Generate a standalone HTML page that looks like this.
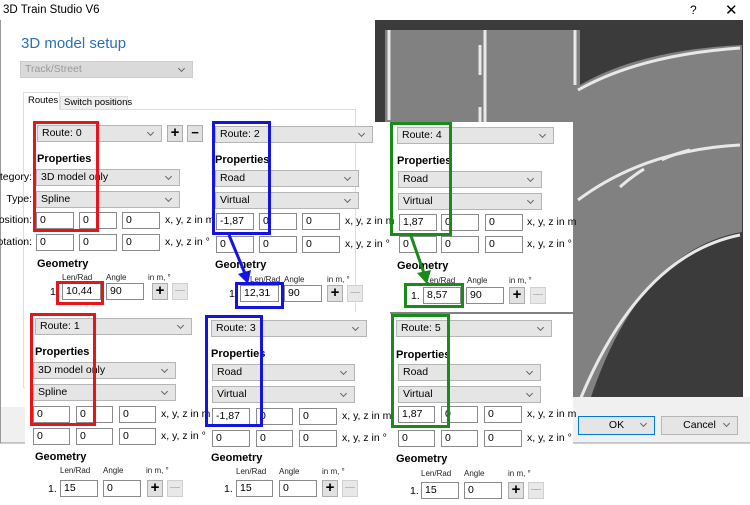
<!DOCTYPE html>
<html><head><meta charset="utf-8"><style>
*{margin:0;padding:0;box-sizing:border-box}
body{width:750px;height:505px;position:relative;overflow:hidden;background:#fff;font-family:"Liberation Sans",sans-serif;font-size:10.5px;color:#000}
.a{position:absolute;white-space:nowrap}
.cb{position:absolute;height:17px;background:#e5e5e5;border:1px solid #b5b5b5;padding:1px 4px;line-height:13px;white-space:nowrap}
.cb:after{content:"";position:absolute;right:8px;top:4px;width:4px;height:4px;border-right:1px solid #666;border-bottom:1px solid #666;transform:rotate(45deg)}
.in{position:absolute;height:17px;background:#fff;border:1px solid #8a8a8a;padding:1px 3px;line-height:13px;white-space:nowrap}
.bt{position:absolute;width:16px;height:17px;background:#e1e1e1;border:1px solid #adadad;text-align:center;font-weight:bold;font-size:15px;line-height:14px}
.bt.d{color:#bbb;background:#e8e8e8;border-color:#d0d0d0;font-size:10px}
.b{font-weight:bold;font-size:11px}
.s{font-size:8px;color:#222}
.r{position:absolute;border:3px solid}
.lb{position:absolute;right:718px;white-space:nowrap}
</style></head><body>
<svg class="a" style="left:0;top:0" width="750" height="505">
<rect x="375" y="20" width="368" height="387" fill="#3b3b3b"/>
<path d="M385 30 L580 30 L580 85 Q640 50 742 45 L742 232 Q640 250 590 400 L385 400 Z" fill="#818181"/>
<path d="M389 30 V120 M575 30 V85" stroke="#e8e8e8" stroke-width="3" fill="none"/>
<path d="M485 30 V122" stroke="#e8e8e8" stroke-width="3"/>
<path d="M480 45 V75 M480 107 V122" stroke="#e8e8e8" stroke-width="3"/>
<path d="M578 90 Q640 55 740 48" stroke="#e8e8e8" stroke-width="3" fill="none"/>
<path d="M578 200 Q645 150 740 145" stroke="#e8e8e8" stroke-width="3" fill="none"/>
<path d="M620 187 Q650 160 690 150" stroke="#e8e8e8" stroke-width="3" fill="none" stroke-dasharray="30 20"/>
<path d="M740 235 Q640 255 580 400" stroke="#e8e8e8" stroke-width="3" fill="none"/>
<rect x="573" y="397" width="177" height="46" fill="#f0f0f0"/>
<rect x="0" y="407" width="573" height="36" fill="#f0f0f0"/>
<line x1="0" y1="443" x2="750" y2="443" stroke="#999"/>
<line x1="0.5" y1="20" x2="0.5" y2="443" stroke="#999"/>
</svg>
<div class="a" style="left:3px;top:4px;font-size:11.5px">3D Train Studio V6</div>
<div class="a" style="left:690px;top:3px;font-size:12px">?</div>
<div class="a" style="left:725px;top:1px;font-size:15px">✕</div>
<div class="a" style="left:21px;top:35px;font-size:15px;color:#2b6fb5">3D model setup</div>
<div class="cb" style="left:20px;top:61px;width:173px;color:#999;background:#dadada;border-color:#ccc">Track/Street</div>
<div class="a" style="left:23px;top:109px;width:333px;height:279px;border:1px solid #ddd"></div>
<div class="a" style="left:60px;top:96px;width:68px;height:14px;background:#f0f0f0;border:1px solid #ddd;font-size:9.5px;padding-left:3px">Switch positions</div>
<div class="a" style="left:23px;top:92px;width:37px;height:18px;background:#fff;border:1px solid #ddd;border-bottom:none;font-size:9.5px;padding:2px 0 0 4px">Routes</div>
<div class="lb" style="top:171px">ategory:</div>
<div class="lb" style="top:193px">Type:</div>
<div class="lb" style="top:214px">Position:</div>
<div class="lb" style="top:236px">otation:</div>
<div class="a" style="left:373px;top:122px;width:17px;height:190px;background:#fff"></div>
<div class="a" style="left:390px;top:122px;width:183px;height:190px;background:#fff"></div>
<div class="a" style="left:25px;top:312px;width:365px;height:193px;background:#fff"></div>
<div class="a" style="left:390px;top:314px;width:183px;height:191px;background:#fff"></div>
<div class="cb" style="left:578px;top:416px;width:77px;height:19px;border:1px solid #0078d7;text-align:center;padding-top:2px">OK</div>
<div class="cb" style="left:661px;top:416px;width:77px;height:19px;text-align:center;padding-top:2px">Cancel</div>

<div class="a" style="left:37px;top:125px">
<div class="cb" style="left:0;top:0;width:125px">Route: 0</div>
<div class="bt" style="left:130px;top:0">+</div><div class="bt" style="left:150px;top:0;font-size:13px">−</div>
<div class="a b" style="left:0;top:28px">Properties</div>
<div class="cb" style="left:-1px;top:44px;width:144px">3D model only</div>
<div class="cb" style="left:-1px;top:66px;width:144px">Spline</div>
<div class="in" style="left:-1px;top:87px;width:38px">0</div><div class="in" style="left:42px;top:87px;width:38px">0</div><div class="in" style="left:85px;top:87px;width:38px">0</div><div class="a" style="left:128px;top:89px">x, y, z in m</div>
<div class="in" style="left:-1px;top:109px;width:38px">0</div><div class="in" style="left:42px;top:109px;width:38px">0</div><div class="in" style="left:85px;top:109px;width:38px">0</div><div class="a" style="left:128px;top:111px">x, y, z in °</div>
<div class="a b" style="left:0;top:133px">Geometry</div>
<div class="a s" style="left:25px;top:148px">Len/Rad</div><div class="a s" style="left:69px;top:148px">Angle</div><div class="a s" style="left:111px;top:148px">in m, °</div>
<div class="a" style="left:13px;top:161px">1.</div><div class="in" style="left:25px;top:158px;width:39px">10,44</div><div class="in" style="left:69px;top:158px;width:38px">90</div>
<div class="bt" style="left:115px;top:158px">+</div><div class="bt d" style="left:135px;top:158px">—</div>
</div>

<div class="a" style="left:215px;top:126px">
<div class="cb" style="left:0;top:0;width:158px">Route: 2</div>
<div class="a b" style="left:0;top:28px">Properties</div>
<div class="cb" style="left:0;top:44px;width:144px">Road</div>
<div class="cb" style="left:0;top:66px;width:144px">Virtual</div>
<div class="in" style="left:1px;top:87px;width:38px">-1,87</div><div class="in" style="left:44px;top:87px;width:38px">0</div><div class="in" style="left:87px;top:87px;width:38px">0</div><div class="a" style="left:130px;top:89px">x, y, z in m</div>
<div class="in" style="left:1px;top:110px;width:38px">0</div><div class="in" style="left:44px;top:110px;width:38px">0</div><div class="in" style="left:87px;top:110px;width:38px">0</div><div class="a" style="left:130px;top:112px">x, y, z in °</div>
<div class="a b" style="left:0;top:133px">Geometry</div>
<div class="a s" style="left:35px;top:149px">Len/Rad</div><div class="a s" style="left:69px;top:149px">Angle</div><div class="a s" style="left:112px;top:149px">in m, °</div>
<div class="a" style="left:14px;top:162px">1.</div><div class="in" style="left:25px;top:159px;width:39px">12,31</div><div class="in" style="left:69px;top:159px;width:38px">90</div>
<div class="bt" style="left:112px;top:159px">+</div><div class="bt d" style="left:132px;top:159px">—</div>
</div>

<div class="a" style="left:397px;top:127px">
<div class="cb" style="left:0;top:0;width:157px">Route: 4</div>
<div class="a b" style="left:0;top:28px">Properties</div>
<div class="cb" style="left:1px;top:44px;width:144px">Road</div>
<div class="cb" style="left:1px;top:66px;width:144px">Virtual</div>
<div class="in" style="left:2px;top:87px;width:38px">1,87</div><div class="in" style="left:44px;top:87px;width:38px">0</div><div class="in" style="left:88px;top:87px;width:38px">0</div><div class="a" style="left:130px;top:89px">x, y, z in m</div>
<div class="in" style="left:2px;top:109px;width:38px">0</div><div class="in" style="left:44px;top:109px;width:38px">0</div><div class="in" style="left:88px;top:109px;width:38px">0</div><div class="a" style="left:130px;top:111px">x, y, z in °</div>
<div class="a b" style="left:0;top:133px">Geometry</div>
<div class="a s" style="left:28px;top:149px">Len/Rad</div><div class="a s" style="left:70px;top:149px">Angle</div><div class="a s" style="left:112px;top:149px">in m, °</div>
<div class="a" style="left:14px;top:163px">1.</div><div class="in" style="left:26px;top:160px;width:38px">8,57</div><div class="in" style="left:69px;top:160px;width:38px">90</div>
<div class="bt" style="left:112px;top:160px">+</div><div class="bt d" style="left:133px;top:160px">—</div>
</div>

<div class="a" style="left:35px;top:318px">
<div class="cb" style="left:0;top:0;width:157px">Route: 1</div>
<div class="a b" style="left:0;top:28px">Properties</div>
<div class="cb" style="left:-2px;top:44px;width:143px">3D model only</div>
<div class="cb" style="left:-2px;top:66px;width:143px">Spline</div>
<div class="in" style="left:-2px;top:88px;width:37px">0</div><div class="in" style="left:41px;top:88px;width:37px">0</div><div class="in" style="left:84px;top:88px;width:37px">0</div><div class="a" style="left:126px;top:90px">x, y, z in m</div>
<div class="in" style="left:-2px;top:110px;width:37px">0</div><div class="in" style="left:41px;top:110px;width:37px">0</div><div class="in" style="left:84px;top:110px;width:37px">0</div><div class="a" style="left:126px;top:112px">x, y, z in °</div>
<div class="a b" style="left:0;top:133px">Geometry</div>
<div class="a s" style="left:25px;top:148px">Len/Rad</div><div class="a s" style="left:68px;top:148px">Angle</div><div class="a s" style="left:111px;top:148px">in m, °</div>
<div class="a" style="left:13px;top:165px">1.</div><div class="in" style="left:25px;top:162px;width:38px">15</div><div class="in" style="left:68px;top:162px;width:38px">0</div>
<div class="bt" style="left:112px;top:162px">+</div><div class="bt d" style="left:132px;top:162px">—</div>
</div>

<div class="a" style="left:211px;top:320px">
<div class="cb" style="left:0;top:0;width:156px">Route: 3</div>
<div class="a b" style="left:0;top:28px">Properties</div>
<div class="cb" style="left:1px;top:44px;width:143px">Road</div>
<div class="cb" style="left:1px;top:66px;width:143px">Virtual</div>
<div class="in" style="left:1px;top:88px;width:38px">-1,87</div><div class="in" style="left:45px;top:88px;width:37px">0</div><div class="in" style="left:88px;top:88px;width:38px">0</div><div class="a" style="left:131px;top:90px">x, y, z in m</div>
<div class="in" style="left:1px;top:110px;width:38px">0</div><div class="in" style="left:45px;top:110px;width:37px">0</div><div class="in" style="left:88px;top:110px;width:38px">0</div><div class="a" style="left:131px;top:112px">x, y, z in °</div>
<div class="a b" style="left:0;top:132px">Geometry</div>
<div class="a s" style="left:25px;top:147px">Len/Rad</div><div class="a s" style="left:68px;top:147px">Angle</div><div class="a s" style="left:111px;top:147px">in m, °</div>
<div class="a" style="left:13px;top:163px">1.</div><div class="in" style="left:25px;top:160px;width:37px">15</div><div class="in" style="left:68px;top:160px;width:38px">0</div>
<div class="bt" style="left:111px;top:160px">+</div><div class="bt d" style="left:131px;top:160px">—</div>
</div>

<div class="a" style="left:396px;top:320px">
<div class="cb" style="left:0;top:0;width:156px">Route: 5</div>
<div class="a b" style="left:0;top:29px">Properties</div>
<div class="cb" style="left:2px;top:44px;width:143px">Road</div>
<div class="cb" style="left:2px;top:66px;width:143px">Virtual</div>
<div class="in" style="left:2px;top:86px;width:37px">1,87</div><div class="in" style="left:45px;top:86px;width:37px">0</div><div class="in" style="left:88px;top:86px;width:38px">0</div><div class="a" style="left:131px;top:88px">x, y, z in m</div>
<div class="in" style="left:2px;top:110px;width:37px">0</div><div class="in" style="left:45px;top:110px;width:37px">0</div><div class="in" style="left:88px;top:110px;width:38px">0</div><div class="a" style="left:131px;top:112px">x, y, z in °</div>
<div class="a b" style="left:0;top:133px">Geometry</div>
<div class="a s" style="left:25px;top:149px">Len/Rad</div><div class="a s" style="left:68px;top:149px">Angle</div><div class="a s" style="left:112px;top:149px">in m, °</div>
<div class="a" style="left:14px;top:165px">1.</div><div class="in" style="left:25px;top:162px;width:38px">15</div><div class="in" style="left:68px;top:162px;width:38px">0</div>
<div class="bt" style="left:112px;top:162px">+</div><div class="bt d" style="left:132px;top:162px">—</div>
</div>

<div class="r" style="left:33px;top:121px;width:66px;height:111px;border-color:#e8141b"></div>
<div class="r" style="left:56px;top:281px;width:48px;height:24px;border-color:#e8141b"></div>
<div class="r" style="left:30px;top:313px;width:66px;height:113px;border-color:#e8141b"></div>
<div class="r" style="left:212px;top:121px;width:59px;height:114px;border-color:#1414e0"></div>
<div class="r" style="left:235px;top:282px;width:49px;height:27px;border-color:#1414e0"></div>
<div class="r" style="left:205px;top:315px;width:58px;height:112px;border-color:#1414e0"></div>
<div class="r" style="left:390px;top:122px;width:62px;height:114px;border-color:#1a8a1a"></div>
<div class="r" style="left:404px;top:283px;width:60px;height:25px;border-color:#1a8a1a"></div>
<div class="r" style="left:391px;top:314px;width:59px;height:114px;border-color:#1a8a1a"></div>
<svg class="a" style="left:0;top:0" width="750" height="505">
<line x1="229" y1="235" x2="246" y2="276" stroke="#1414e0" stroke-width="3"/>
<path d="M238 274 L248 284 L251 270 Z" fill="#1414e0"/>
<line x1="411" y1="236" x2="425" y2="276" stroke="#1a8a1a" stroke-width="3"/>
<path d="M417 273 L427 284 L431 270 Z" fill="#1a8a1a"/>
</svg>
</body></html>
